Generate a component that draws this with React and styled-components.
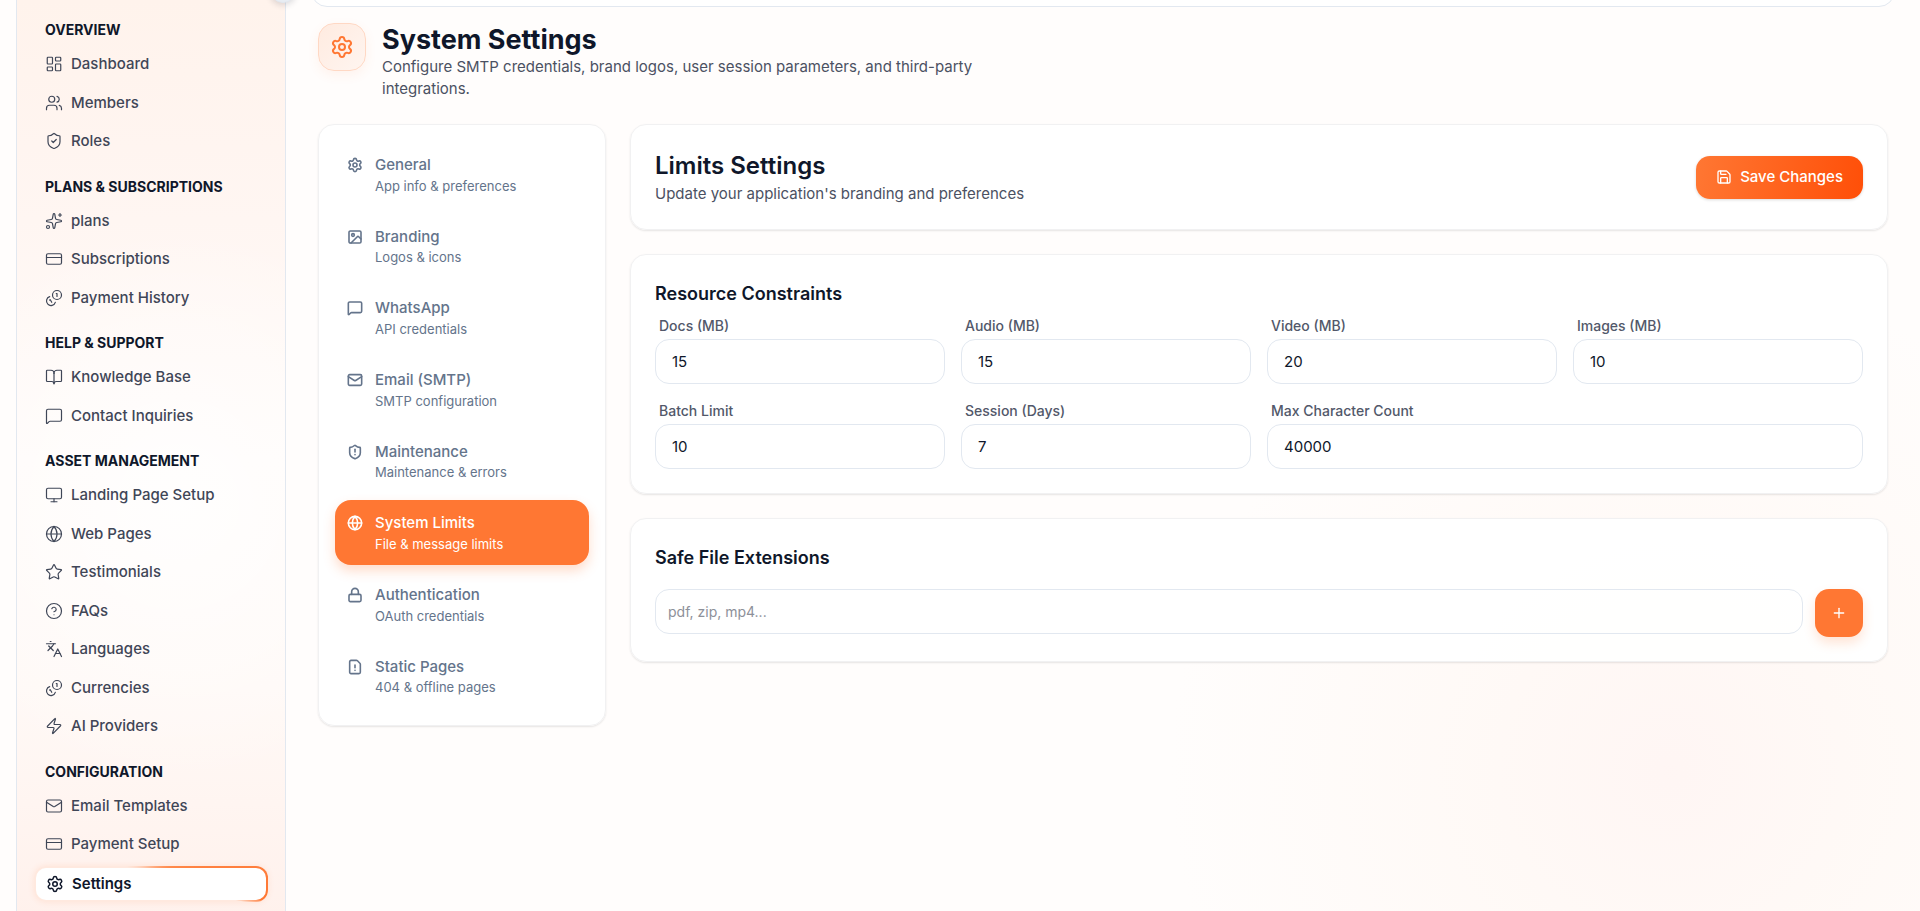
import React, { useState } from "react";
import styled, { createGlobalStyle, css } from "styled-components";
import {
    LayoutDashboard, Users, ShieldCheck, Sparkles, CreditCard, BookOpen, MessageSquare,
    Monitor, Globe, Star, CircleHelp, Languages, Zap, Mail, Settings, Image,
    ShieldAlert, Lock, FileWarning, Save, Plus
} from "lucide-react";

const GlobalStyle = createGlobalStyle`
    * { box-sizing : border-box ; }
    body {
        margin : 0 ;
        color : #0f172a ;
        font-family : Inter, "Liberation Sans", sans-serif ;
        font-size : 15px ;
        line-height : 1.5 ;
        background : #fffdfc ;
    }
    button, input { font : inherit ; }
    h1, h2, h3, p, ul { margin : 0 ; padding : 0 ; }
`

const Page = styled.div`
    display : flex ;
    min-height : 100vh ;
    padding-left : 16px ;
    overflow : hidden ;
    background :
        radial-gradient(circle at 87% 84%, rgba(255, 245, 243, 0.9), rgba(255, 248, 244, 0.7) 200px, rgba(255, 250, 246, 0) 500px),
        #fffdfc ;
`

const Sidebar = styled.aside`
    position : relative ;
    flex : 0 0 270px ;
    padding : 20px 17px 0 ;
    border : solid #e2e8f0 ;
    border-width : 0 1px ;
    background :
        radial-gradient(circle at 60% 55%, rgba(255, 255, 255, 0.8), rgba(255, 255, 255, 0) 280px),
        linear-gradient(#fff3ec, #fff6f2 24%, #fffbf9 50%, #fff9f6 75%, #fff1ec) ;
`

const CollapseButton = styled.button`
    position : absolute ;
    top : -23px ;
    right : -11px ;
    width : 26px ;
    height : 26px ;
    padding : 0 ;
    border : 1px solid #e2e8f0 ;
    border-radius : 50% ;
    background : #e8edf3 ;
    box-shadow : 0 2px 6px rgba(15, 23, 42, 0.15) ;
`

const NavGroup = styled.section`
    margin-bottom : 16px ;
`

const NavTitle = styled.h3`
    padding : 0 11px ;
    margin-bottom : 5px ;
    font-size : 14px ;
    font-weight : 700 ;
    line-height : 20px ;
    text-transform : uppercase ;
`

const NavLink = styled.a`
    display : flex ;
    align-items : center ;
    gap : 8px ;
    padding : 8px 11px ;
    color : #3f4657 ;
    font-weight : 500 ;
    text-decoration : none ;

    ${({ $active }) => $active && css`
        margin-top : 2px ;
        padding : 5px 10px ;
        border : 2px solid transparent ;
        border-radius : 12px ;
        color : #0f172a ;
        font-weight : 600 ;
        background :
            linear-gradient(#ffffff, #ffffff) padding-box,
            conic-gradient(#ffb38c, #ff8a4c 50deg, #ff7733 98deg, #ffe9df 101deg, #ffe9df 305deg, #ffb38c) border-box ;
        box-shadow : 0 0 6px rgba(255, 119, 51, 0.12) ;
    `}
`

const Main = styled.main`
    flex : 1 ;
    min-width : 0 ;
    padding : 0 25px ;
`

const TopBar = styled.header`
    height : 40px ;
    margin-top : -33px ;
    border : 1px solid #e2e8f0 ;
    border-radius : 16px ;
    background : #ffffff ;
`

const Content = styled.div`
    padding : 16px 7px 0 ;
`

const PageHeader = styled.div`
    display : flex ;
    gap : 16px ;
    margin-bottom : 24px ;
`

const HeaderIcon = styled.div`
    display : flex ;
    flex : 0 0 48px ;
    align-items : center ;
    justify-content : center ;
    height : 48px ;
    border : 1px solid #ffd8c4 ;
    border-radius : 16px ;
    color : #ff7733 ;
    background : linear-gradient(135deg, #ffebe0, #fff5f0) ;
    box-shadow : 0 4px 12px rgba(255, 119, 51, 0.08) ;
`

const PageTitle = styled.h1`
    font-size : 27px ;
    font-weight : 700 ;
    line-height : 33px ;
`

const Muted = styled.p`
    max-width : 620px ;
    color : #4b5162 ;
    line-height : 22px ;
`

const Layout = styled.div`
    display : grid ;
    grid-template-columns : 288px minmax(0, 1fr) ;
    align-items : start ;
    gap : 24px ;
`

const Card = styled.section`
    padding : 24px ;
    border : 1px solid #f1f1f2 ;
    border-radius : 16px ;
    background : rgba(255, 255, 255, 0.9) ;
    box-shadow : 0 1px 2px rgba(0, 0, 0, 0.1) ;
`

const TabCard = styled(Card)`
    display : flex ;
    flex-direction : column ;
    gap : 7px ;
    padding : 17px 16px 16px ;
`

const Tab = styled.button`
    display : flex ;
    gap : 12px ;
    padding : 12px ;
    border : 0 ;
    border-radius : 16px ;
    text-align : left ;
    color : ${({ $active }) => ($active ? "#ffffff" : "#64748b")} ;
    background : ${({ $active }) => ($active ? "#ff7733" : "transparent")} ;
    box-shadow : ${({ $active }) => ($active ? "0 6px 12px rgba(255, 119, 51, 0.25)" : "none")} ;
    cursor : pointer ;

    svg { flex : none ; margin-top : 3px ; }
`

const TabName = styled.span`
    display : block ;
    font-weight : 500 ;
`

const TabHint = styled.span`
    display : block ;
    font-size : 13px ;
    line-height : 1.4 ;
`

const Column = styled.div`
    display : flex ;
    flex-direction : column ;
    gap : 24px ;
`

const HeadCard = styled(Card)`
    display : flex ;
    align-items : center ;
    justify-content : space-between ;
`

const SectionTitle = styled.h2`
    font-size : 24px ;
    font-weight : 600 ;
    line-height : 34px ;
`

const CardTitle = styled.h3`
    font-size : 18px ;
    font-weight : 600 ;
    line-height : 30px ;
`

const SaveButton = styled.button`
    display : flex ;
    align-items : center ;
    gap : 8px ;
    height : 43px ;
    padding : 0 20px ;
    border : 0 ;
    border-radius : 14px ;
    color : #ffffff ;
    font-weight : 500 ;
    background : linear-gradient(100deg, #ff7733, #ff4f08) ;
    box-shadow : 0 1px 3px rgba(0, 0, 0, 0.15) ;
    cursor : pointer ;
`

const Fields = styled.div`
    display : grid ;
    grid-template-columns : repeat(4, minmax(0, 1fr)) ;
    gap : 16px ;
    margin-top : 6px ;
`

const Field = styled.div`
    grid-column : span ${({ $span }) => $span || 1} ;
`

const Label = styled.label`
    display : block ;
    padding : 0 4px 3px ;
    color : #52586a ;
    font-size : 14px ;
    font-weight : 500 ;
    line-height : 21px ;
`

const Input = styled.input`
    display : block ;
    width : 100% ;
    height : 45px ;
    padding : 0 16px ;
    border : 1px solid #e2e8f0 ;
    border-radius : 14px ;
    outline : 0 ;
    color : #0f172a ;
    background : transparent ;
`

const AddRow = styled.div`
    display : flex ;
    gap : 12px ;
    margin-top : 16px ;
`

const ExtensionInput = styled(Input)`
    flex : 1 ;
    padding : 0 12px ;
    font-size : 14px ;

    &::placeholder { color : #8d9099 ; opacity : 1 ; }
`

const AddButton = styled.button`
    display : flex ;
    align-items : center ;
    justify-content : center ;
    width : 48px ;
    height : 48px ;
    border : 0 ;
    border-radius : 14px ;
    color : #ffffff ;
    background : #ff7733 ;
    box-shadow : 0 6px 12px rgba(255, 119, 51, 0.2) ;
    cursor : pointer ;
`

const CoinsIcon = ({ size, strokeWidth }) => (
    <svg width={size} height={size} viewBox="0 0 24 24" fill="none" stroke="currentColor" strokeWidth={strokeWidth} strokeLinecap="round" strokeLinejoin="round">
        <path d="M13.744 17.736a6 6 0 1 1-7.48-7.48" />
        <path d="M15 6h1v4" />
        <path d="m6.134 14.768.866-.5 2 3.464" />
        <circle cx="16" cy="8" r="6" />
    </svg>
)

const navGroups = [
    { title: "Overview", items: [["Dashboard", LayoutDashboard], ["Members", Users], ["Roles", ShieldCheck]] },
    { title: "Plans & Subscriptions", items: [["plans", Sparkles], ["Subscriptions", CreditCard], ["Payment History", CoinsIcon]] },
    { title: "Help & Support", items: [["Knowledge Base", BookOpen], ["Contact Inquiries", MessageSquare]] },
    {
        title: "Asset Management",
        items: [
            ["Landing Page Setup", Monitor], ["Web Pages", Globe], ["Testimonials", Star], ["FAQs", CircleHelp],
            ["Languages", Languages], ["Currencies", CoinsIcon], ["AI Providers", Zap]
        ]
    },
    { title: "Configuration", items: [["Email Templates", Mail], ["Payment Setup", CreditCard], ["Settings", Settings]] },
]

const tabs = [
    { name: "General", hint: "App info & preferences", Icon: Settings },
    { name: "Branding", hint: "Logos & icons", Icon: Image },
    { name: "WhatsApp", hint: "API credentials", Icon: MessageSquare },
    { name: "Email (SMTP)", hint: "SMTP configuration", Icon: Mail },
    { name: "Maintenance", hint: "Maintenance & errors", Icon: ShieldAlert },
    { name: "System Limits", hint: "File & message limits", Icon: Globe },
    { name: "Authentication", hint: "OAuth credentials", Icon: Lock },
    { name: "Static Pages", hint: "404 & offline pages", Icon: FileWarning },
]

const fields = [
    { id: "docs", label: "Docs (MB)", value: "15" },
    { id: "audio", label: "Audio (MB)", value: "15" },
    { id: "video", label: "Video (MB)", value: "20" },
    { id: "images", label: "Images (MB)", value: "10" },
    { id: "batch", label: "Batch Limit", value: "10" },
    { id: "session", label: "Session (Days)", value: "7" },
    { id: "characters", label: "Max Character Count", value: "40000", span: 2 },
]

const App = () => {
    const [activeTab, setActiveTab] = useState("System Limits")

    return (
        <Page>
            <GlobalStyle />

            <Sidebar>
                <CollapseButton aria-label="Collapse sidebar" />
                {navGroups.map((group) => (
                    <NavGroup key={group.title}>
                        <NavTitle>{group.title}</NavTitle>
                        {group.items.map(([name, Icon]) => (
                            <NavLink href="#" key={name} $active={name === "Settings"}>
                                <Icon size={18} strokeWidth={name === "Settings" ? 2 : 1.6} />
                                {name}
                            </NavLink>
                        ))}
                    </NavGroup>
                ))}
            </Sidebar>

            <Main>
                <TopBar />
                <Content>
                    <PageHeader>
                        <HeaderIcon>
                            <Settings size={24} />
                        </HeaderIcon>
                        <div>
                            <PageTitle>System Settings</PageTitle>
                            <Muted>
                                Configure SMTP credentials, brand logos, user session parameters, and third-party integrations.
                            </Muted>
                        </div>
                    </PageHeader>

                    <Layout>
                        <TabCard as="nav">
                            {tabs.map(({ name, hint, Icon }) => (
                                <Tab key={name} $active={name === activeTab} onClick={() => setActiveTab(name)}>
                                    <Icon size={16} strokeWidth={2.4} />
                                    <span>
                                        <TabName>{name}</TabName>
                                        <TabHint>{hint}</TabHint>
                                    </span>
                                </Tab>
                            ))}
                        </TabCard>

                        <Column>
                            <HeadCard>
                                <div>
                                    <SectionTitle>Limits Settings</SectionTitle>
                                    <Muted>Update your application's branding and preferences</Muted>
                                </div>
                                <SaveButton>
                                    <Save size={16} />
                                    Save Changes
                                </SaveButton>
                            </HeadCard>

                            <Card>
                                <CardTitle>Resource Constraints</CardTitle>
                                <Fields>
                                    {fields.map((field) => (
                                        <Field key={field.id} $span={field.span}>
                                            <Label htmlFor={field.id}>{field.label}</Label>
                                            <Input id={field.id} defaultValue={field.value} />
                                        </Field>
                                    ))}
                                </Fields>
                            </Card>

                            <Card>
                                <CardTitle>Safe File Extensions</CardTitle>
                                <AddRow>
                                    <ExtensionInput aria-label="File extension" placeholder="pdf, zip, mp4..." />
                                    <AddButton aria-label="Add extension">
                                        <Plus size={16} />
                                    </AddButton>
                                </AddRow>
                            </Card>
                        </Column>
                    </Layout>
                </Content>
            </Main>
        </Page>
    )
}

export default App;
